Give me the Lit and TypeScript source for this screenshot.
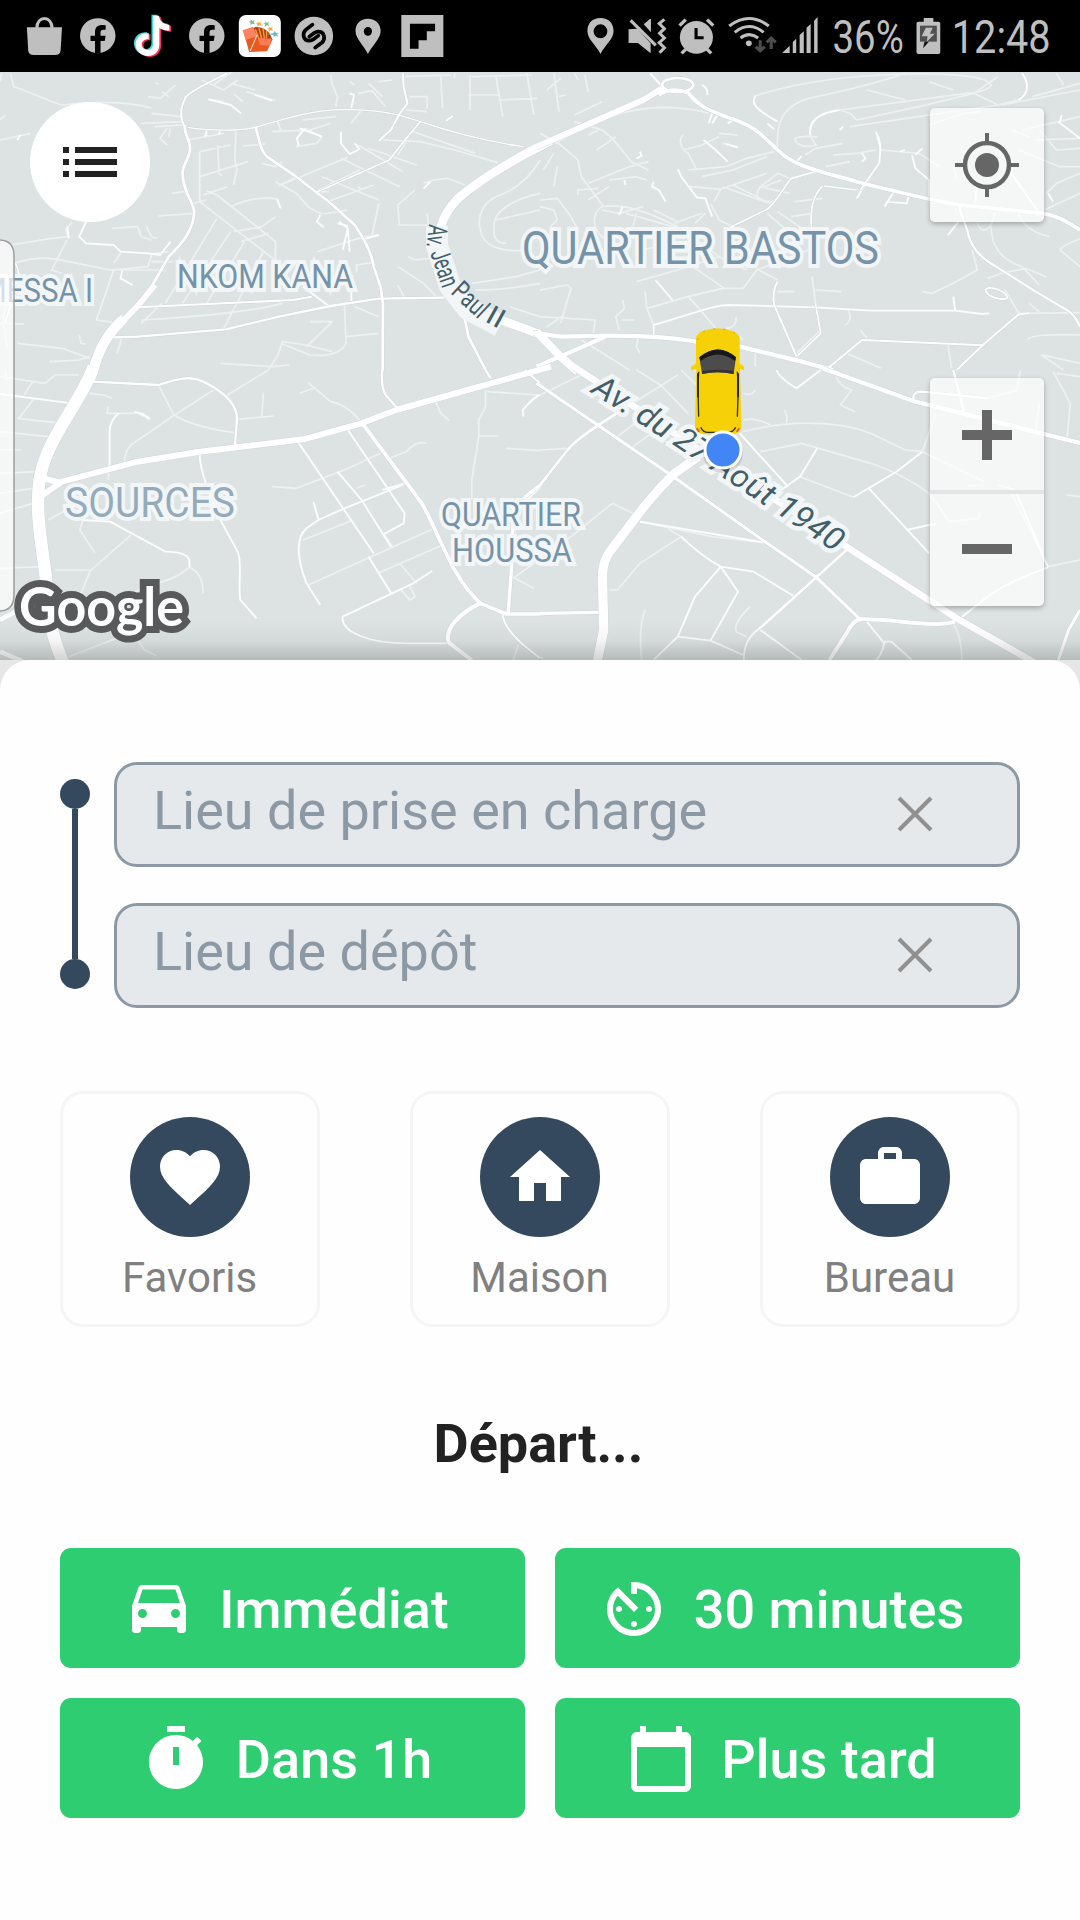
import { LitElement, html, svg, css } from "lit";
import { customElement, property } from "lit/decorators.js";

type Tile = { at: string; minor: string; mid: string; roads: [string, number][] };

/* The map is drawn in four tiles, each one with its own drawing units. */
const SX = 540 / 1568;
const tile = (x: number, y: number) => `translate(${x} ${y}) scale(${SX} ${1 / 3})`;

const TILES: Tile[] = [
  {
    at: tile(0, 70),
    minor: `M5 10L0 35M30 10L40 50C100 70 130 90 180 105C300 90 400 100 440 115M440 130L525 140M0 150L15 135
      M430 80L465 85L510 45M450 38L460 42M470 65L490 80M530 155L410 160M450 170L535 165M485 175L465 205L485 225M495 175L490 200M0 210L90 190
      M545 210L650 190M600 180V200M685 180L682 270L688 300L678 345M632 225L636 310L645 318M580 245V395L800 572M580 245L670 225M705 228L770 222
      M580 320L720 275M590 375L660 350M600 362L630 375L800 515V575M675 408C720 385 770 380 808 388M560 400L600 390M500 370L550 362M460 438L565 430
      M630 445L480 700M670 485L530 700M710 515L600 700M765 545L650 775M680 485L760 470L800 440M700 515L780 490M410 750C600 740 750 720 820 700
      M760 280L800 290L820 275M860 320L810 347L1010 262M955 365L915 365L1045 300M950 395L1085 345M800 335L860 370L900 415L935 432M940 432L1010 420M920 545L1010 515L1060 500L1100 495
      M990 265L1160 350M1040 225L1170 305M1070 235L1210 285M1040 350L1050 360M1110 210L1220 215L1320 240L1445 278M1200 185L1380 250M1155 255L1180 215
      M585 30L650 60L690 30M620 45L680 0M670 40L740 60M680 72L705 95M715 65L800 92M650 95L605 88M790 185L900 180L960 160M805 150L815 180M880 150L975 140M885 175L935 200L920 220L860 230
      M960 15L965 45L980 80L975 110M1015 35L1030 45M1040 70L1080 62L1120 110M1070 40L1110 80M1050 120L1020 160M1100 35L1140 30M1190 80H1240V115M1165 20L1310 15M1280 20L1285 115
      M1320 10V25M1365 15V120M1360 75H1450M1440 20L1460 140M1530 10L1550 135M1370 20L1545 15M1450 90L1560 85M1160 465L1155 405L1205 360M1155 465H1240M1230 340L1260 330L1300 325L1350 345
      M1568 270C1540 320 1500 360 1440 380C1400 400 1385 440 1395 480C1400 520 1440 550 1540 540M1568 370C1480 390 1430 430 1435 470C1430 500 1440 520 1470 520M1440 450L1568 420M1370 640L1500 620L1568 600M1380 660C1450 660 1520 650 1568 640
      M1155 590L1230 640L1270 683M1185 560L1205 570L1245 565M1155 645L1175 685M1480 710L1568 740M1035 605V585L1080 578M1000 700L1005 820C990 850 950 860 900 855L815 820M780 898L805 860L820 815L890 825L965 845M890 830L965 755H900M1005 800L1100 790M640 880L790 890L840 885
      M355 800L340 850M230 795L235 820L250 822M50 820L180 835L260 865M145 875L230 870L260 860M0 760L70 762M15 700L10 760L20 830M450 550L490 545M440 575H500M480 600L330 600L280 750L330 758L360 735M195 510L150 600L180 610M330 580L350 550
      M40 580C100 560 140 560 200 575L320 600L430 590L440 555M30 525L150 505L200 500M325 475L400 470L410 500L440 510M425 470L440 500L455 505M210 455L190 480L200 505M1030 710L1100 740M410 760L470 700M1100 400L1080 500M1240 430L1245 470M1180 120L1240 125M935 320L1100 390`,
    mid: `M250 455L230 500L250 520L330 525L350 545L430 550L465 555L495 515M355 602L350 625L385 645M985 455L1010 475L1015 545M1010 475L995 540M1020 640V695M880 650L955 708M870 175L935 200M990 185V220L1015 252L1040 240M605 88L670 105L700 130M1015 70L1028 75L1020 115M740 75L790 92M595 200L600 180M635 195L640 180M805 388L815 415M1055 508L1100 495M1295 152L1315 138M1030 220L1045 240M1230 355L1250 335M930 435L920 455L940 472M980 460L1010 468M50 210L60 195M195 470L200 505M868 228L862 205L885 175`,
    roads: [
      ["M535 168C520 140 525 110 540 80C560 60 600 40 660 10", 6],
      ["M545 172C600 182 700 185 750 170C830 145 900 120 1000 118C1100 120 1150 130 1220 155C1350 200 1450 220 1520 230", 4],
      ["M742 170L752 210Q760 245 775 260L860 320L960 400L1030 465C1060 510 1080 550 1085 590L1105 650L1112 700L1111 900", 8],
      ["M400 712L650 700L850 690L905 680", 6],
      ["M330 802L400 800L655 778L810 740L960 708L1100 686L1290 683", 7],
      ["M1170 10L1172 50L1183 100L1160 132L1135 180L1100 212", 6],
      ["M1222 153L1180 205L1130 270L915 368", 5],
      ["M1300 683L1340 720Q1350 740 1360 800L1410 900", 8],
      ["M538 165C530 185 550 200 552 235C550 270 530 280 530 310C532 370 560 390 564 425C562 480 530 520 490 560L440 650L400 705", 8],
      ["M270 905C285 840 320 790 350 760L400 708L450 645", 18],
      ["M270 905C280 860 300 800 360 745", 30],
      ["M1600 212C1450 290 1380 340 1330 385C1280 440 1265 490 1285 560C1300 640 1340 700 1430 740C1490 765 1530 775 1580 800", 26],
      ["M45 580Q60 610 55 650L30 705L15 760", 5],
    ],
  },
  {
    at: tile(540, 70),
    minor: `M40 10L55 125M20 60L60 25M55 80L75 75M100 10L110 30M130 15L140 65M100 135L180 95M45 220C150 150 250 115 350 112C420 112 460 120 490 130M100 155L180 180L210 205L265 275L315 300
      M0 190L60 225L110 270L120 320L185 410M140 195L170 180M165 240L220 200M140 340L260 290L315 275M140 390L200 350M200 330L280 320L310 330M0 390L50 385L90 440L110 480M0 410L40 420L50 450L30 470M40 350L50 290M10 300L40 250M110 375V360L170 355
      M415 195C400 210 410 240 430 250L455 300M415 240L460 228M430 300L540 290L600 265L680 245M470 320L560 300L660 260M435 350L525 358L560 345L660 310M460 230L520 200M520 190L575 195M530 220L570 230
      M625 80C610 100 630 120 690 155M620 80C700 50 850 20 1000 15C1200 5 1300 20 1310 45C1310 55 1270 70 1240 70L870 120C800 130 780 160 785 195L800 225M690 245C685 160 700 110 780 85C850 70 950 50 1060 10M870 120L900 130L920 150L1100 110L1260 70L1330 20
      M1400 10C1420 40 1420 70 1390 90L1330 105L900 170M1260 70L1330 105M950 60L1060 90M1130 35L1200 60M1430 80L1568 40M1340 105L1568 60M740 205C740 225 770 235 805 225M740 205C760 195 790 200 805 200M770 255L800 235L880 220M850 255L920 250L975 240M990 240L1100 250L1160 290M830 290L900 275
      M1400 180L1568 140M1450 180L1500 240L1568 235M1390 240L1510 290L1568 290M1440 210L1568 205M1470 370L1500 340L1568 310M1465 420L1568 370M1200 285L1210 330M1130 165L1230 130L1280 125M1370 180L1420 200M1500 10L1520 45
      M725 325L690 310L640 350C620 380 630 395 680 395M650 350L700 330M640 350L725 370M740 395L820 385M560 345L650 390M530 350L680 405M505 395L525 358M560 470L520 450L495 400M690 425L760 475M660 430L710 475M730 440L790 430M450 460L480 430M390 460L470 430M330 420L400 455
      M180 410C150 430 150 470 180 500L240 550M180 410C240 400 300 420 400 470M180 420L230 430L300 410M250 430L420 480L520 560L600 600M280 430L270 470M275 500L370 510M290 540L400 520M280 635L400 600L520 560M430 580L535 655M310 715L430 680L530 655L590 655L630 600L780 540M430 680L470 725L510 775M330 765L310 715L305 665M0 660L80 645L90 655L60 760M0 740L160 750L155 790M20 770L70 735M230 780L220 740L245 715L240 690M235 750H275M285 800L280 830L290 850M120 810L260 900
      M790 620L800 700L815 780L745 850M800 660L875 665M690 665H740M570 740C570 760 560 775 540 775M895 720C905 740 900 760 885 765M930 780L950 805M890 850L990 895M1185 825L1195 895M1110 665L1140 670L1200 640L1270 600L1255 540M1300 625L1340 610L1410 595L1470 620M1350 660L1390 730L1568 728M1420 700L1450 725M1415 810C1430 790 1500 795 1568 795M1455 855L1520 900M1460 855L1568 880
      M1310 470C1310 530 1340 570 1400 590L1450 645M1270 460C1280 490 1310 490 1320 430M1390 430C1400 470 1440 490 1480 500M1510 540C1520 520 1568 510 1568 505M1510 540L1568 590M625 850V890M580 800L590 810M635 600L690 630`,
    mid: `M320 10L355 50M440 75L500 130L490 160M470 45Q490 55 485 75M500 160L515 135M545 160L560 150M290 245L295 258L280 265M245 330L248 345M400 297L410 320L455 382L480 385L500 440M330 335L325 350L345 360L365 395M475 210L510 240L545 275M540 222L575 232M975 185C990 210 990 230 985 280L940 350L920 385M935 250L945 265L935 275M870 180L880 170M980 200L990 240M1080 255L1090 295L1130 330V380M1090 255L1110 235M1045 245L1060 240M660 160L680 178M740 280L760 258M1000 410L1025 370M1005 395L1065 400L1072 372M1505 155L1568 205M1510 155L1515 135M1475 370L1490 395M230 435L240 410M1200 680L1205 720M335 630L385 690M1365 305L1450 430M1265 330V395M1215 455L1185 495M330 765C450 730 500 705 550 705L800 712L960 722L1205 722L1285 732L1305 730M625 80C610 100 630 120 690 155M1400 10C1420 40 1420 70 1390 90M785 195C780 160 800 130 870 120`,
    roads: [
      ["M820 348C790 380 785 420 788 470M825 348L920 360M985 280L930 360", 5],
      ["M555 470L660 418C700 380 710 345 730 325L800 305", 5],
      ["M745 860L680 705C675 680 680 650 690 635", 6],
      ["M745 860L815 790L800 700", 5],
      ["M830 900L935 810L1285 826L1390 733L1420 730M1285 826L1210 900", 6],
      ["M1222 405C1210 420 1240 460 1245 500C1265 560 1310 580 1340 600L1440 665L1530 720Q1550 730 1568 770", 7],
      ["M1293 660C1300 645 1350 660 1358 683C1350 692 1300 685 1293 660", 5],
      ["M330 765V795", 6],
      ["M-10 230L300 90L360 52", 18],
      ["M355 45A45 21 0 1 0 445 45A45 21 0 1 0 355 45", 8],
      ["M345 75Q380 50 430 68C460 110 490 120 540 140C620 165 640 190 690 240C740 290 800 300 920 335C1040 365 1100 385 1220 405L1460 430C1500 435 1540 460 1568 480", 11],
      ["M-20 788L60 800L200 797C350 797 420 808 470 818L580 830L760 875L850 900", 13],
      ["M-10 890L80 850L190 800", 12],
      ["M-10 785L60 860L110 905", 24],
    ],
  },
  {
    at: tile(0, 370),
    minor: `M0 20L130 40L160 15L230 15M20 30L15 0M70 75L95 35M100 85L55 145M50 145L180 160M0 185L140 200M0 240H60M0 310L110 305M0 370L95 355M0 430L95 400M260 70L300 75L325 85M310 130L315 110M310 130H345M780 0L660 75M620 60L500 140L380 225Q360 250 362 275M460 45L505 135Q560 170 680 188M345 130H400L435 148
      M765 68L760 140M692 148L795 138M870 70L910 55M790 350L860 355L1000 300L1105 250M895 38L960 95Q1010 105 1050 158M1130 265L1180 245Q1210 210 1240 220M1060 345L1035 355M1410 60L1410 110L1390 150V200L1370 330V390M1390 198H1448M1470 235L1568 242M1415 65L1568 75M1265 95L1280 130L1305 152
      M140 450L200 415M315 285V330M240 450L232 480L275 548M380 495L262 603L235 670M160 600H262M0 595L120 590M590 670Q590 610 550 592M550 592Q500 635 430 645L200 780M385 790L420 840L455 858M200 860L350 800
      M880 510L1020 452M895 645L1255 478M1100 608L1285 525M1160 580L1210 640M1165 660L1190 690L1205 680L1190 650M1490 625L1550 580M1495 625L1550 655M1520 825L1568 860M1505 825L1490 870M1140 530L1115 492`,
    mid: `M240 450L320 455L480 545Q540 545 550 570L550 592M390 125Q420 130 435 148M345 130Q318 150 318 190V290M865 215L1085 550M1010 180L1175 430L1172 460L1115 492M980 305L1050 390L1135 530M1110 360L1175 340M1000 415L1170 345M910 395L925 450M930 705L890 640C860 560 860 500 890 475L925 450L1000 415M1070 560L1135 668M0 72L210 100M1520 140L1518 120Q1550 80 1568 75M1200 640L995 740C990 790 1080 820 1180 820H1300M1200 640L1255 603M580 255Q580 310 640 450L690 545C705 580 690 640 698 690L745 745M1570 350L1500 420L1490 520`,
    roads: [
      ["M270 35L460 45C530 20 560 20 590 35C650 65 690 100 688 150L682 232", 7],
      ["M1110 0Q1105 50 1120 75L1158 120M1410 0L1425 25M1525 0L1568 40", 7],
      ["M1052 160L1225 400C1280 500 1310 620 1395 700L1470 732H1580", 11],
      ["M1395 700C1330 730 1290 780 1303 818L1370 870", 12],
      ["M1460 732Q1460 770 1520 825L1568 865", 6],
      ["M1475 735L1485 600L1490 420Q1520 380 1575 340", 10],
      ["M0 750L70 712L110 690", 14],
      ["M0 845L80 880", 14],
      ["M1600 -10L1150 120L1050 160L880 208L580 245L400 275L180 335L110 385", 18],
      ["M110 320L180 340", 18],
      ["M272 -10C240 90 130 210 115 330C100 430 125 540 135 640C140 740 150 800 185 880", 36],
    ],
  },
  {
    at: tile(540, 370),
    minor: `M0 75L130 10M280 0L350 45L430 130M170 165L400 15M225 200L340 110M270 230L380 150M0 240L80 235M410 0L470 60M590 70Q615 80 625 60M710 120L718 140L715 160M860 20Q870 50 905 60L872 105L915 125M590 150Q620 140 670 165M590 185C700 155 850 145 960 190L1060 240L1110 245L1150 130
      M640 245L760 220L960 280Q1050 310 1130 370L1190 455L1275 445V425M755 320L910 382M1110 245L1290 335M1240 348L1290 345M1530 375L1568 380M1490 5L1540 100L1530 210M1450 100L1440 180M1395 0L1385 60L1300 85L1100 65M1360 350L1475 590M1500 10L1568 20M0 560L90 500L210 400L270 430
      M290 455L500 500L665 520M200 660H225L290 580L410 500L370 475M1200 760Q1225 800 1225 870M305 720Q285 770 295 870M0 860L10 865M1330 345L1380 360M580 190L720 350M610 710Q560 760 570 785L600 800M1475 590L1568 570`,
    mid: `M410 500Q470 560 525 590L620 605L740 680M525 590L450 680L400 800L495 812L575 665L525 590M330 870L400 800M495 812L590 855M640 780L760 870M635 778Q590 810 592 870M805 235L755 320L700 360M1110 245L1035 305L910 382M955 355L1130 550M1065 480L1130 465M688 0Q690 20 745 55L815 0M945 750L1000 820Q990 860 975 870M1000 815H1020L1080 870M1060 100M1475 592Q1350 640 1300 680L1220 745M1380 360L1475 592M1130 465L1150 462M580 190L720 350M290 455L665 520`,
    roads: [
      ["M0 345L80 240Q110 200 240 120", 8],
      ["M0 730L170 727", 10],
      ["M1568 720L1535 780L1505 870", 9],
      ["M1085 90Q1080 65 1110 65L1300 85M1200 0L1230 120L1210 130", 7],
      ["M740 680L890 540M740 680L635 778", 8],
      ["M840 870L890 790Q910 750 930 748C1020 745 1150 775 1205 755", 12],
      ["M-10 40L380 315L660 520L800 620L930 748", 9],
      ["M820 -5L1090 95L1580 222", 13],
      ["M460 260L390 310Q330 370 280 440L210 535C180 570 180 610 182 650L185 780L165 880", 27],
      ["M95 -12L450 230L890 530L1210 745L1440 880", 20],
    ],
  },
];

/* Words of the bent avenue label: text, x, y, angle, length. */
const JEAN_PAUL: [string, number, number, number, number][] = [
  ["Av.", 429, 224, 96, 23],
  ["Jean", 430, 253, 71, 38],
  ["Paul", 450, 293, 43, 39],
  ["II", 484, 321, 29, 17],
];

@customElement("status-bar")
class StatusBar extends LitElement {
  static styles = css`
    :host { display: block; }
    .bar { display: flex; justify-content: space-between; height: 72px; background: #000; color: #bfbfbf; }
    .group { display: flex; }
    svg { display: block; height: 72px; overflow: visible; }
    text { font-family: Roboto, sans-serif; fill: #bfbfbf; }
  `;
  private icon(x: number, w: number, body: unknown) {
    return html`<svg width=${(w * 540) / 1568} viewBox="${x} 0 ${w} 216" preserveAspectRatio="none" fill="#bfbfbf">${body}</svg>`;
  }
  private face() {
    return svg`<ellipse cx="284" cy="107" rx="51.500" ry="52.500"/><path fill="#000" d="M276 160V123H263V107H276V97C276 82 284 75 297 75L307 76V89H300C294 89 292 92 292 98V107H307L304 123H292V160Z"/>`;
  }
  render() {
    const note = "M443 45H460C461 60 472 71 490 72V90C480 90 470 88 461 82V132C461 152 446 166 428 166C407 166 392 150 392 131C392 111 408 96 430 98V116C419 114 410 121 410 131C410 142 419 148 427 148C437 148 443 140 443 130Z";
    return html`<div class="bar">
      <div class="group">
        ${this.icon(0, 215, svg`<path d="M78 82H180L176 152Q174 165 160 165H98Q84 165 82 152Z"/><path d="M107 84C107 46 151 46 151 84" fill="none" stroke="#bfbfbf" stroke-width="9"/>`)}
        ${this.icon(215, 150, this.face())}
        ${this.icon(365, 165, svg`<path d=${note} fill="#3fdcd8" transform="translate(-4 -1)"/><path d=${note} fill="#f0345c" transform="translate(6 5)"/><path d=${note} fill="#fff" transform="translate(1 2)"/>`)}
        ${this.icon(215, 150, this.face())}
        ${this.icon(680, 157, svg`<rect x="694" y="45" width="122" height="126" rx="21" fill="#fff"/>
          <path d="M707 92L748 82L792 118L776 154L724 156Z" fill="#e55b22"/><path d="M735 84C755 74 785 92 790 116L748 118Z" fill="#a94414"/><path d="M742 88L752 115M752 82L760 114M764 84L768 114M775 92L774 114" stroke="#ff9837" stroke-width="4"/>
          <path d="M705 91L735 80L748 108L714 120Z" fill="#ff8360"/><path d="M748 113L788 116L785 137L756 135Z" fill="#ff7955"/><path d="M747 105L727 153" stroke="#ffd8bd" stroke-width="3"/>
          <g fill="#79bd83"><path d="M728 58L733 63L740 60L737 67L741 73L733 71L728 75V68L723 63L729 64Z"/><path d="M770 64L775 69L782 65L779 72L783 78L775 76L770 80V73L765 69L771 70Z"/></g>
          <path d="M748 64L753 69L760 65L757 72L761 78L753 76L748 80V73L743 69L749 70ZM781 79L786 84L793 81L790 87L794 92L786 91L781 95V88L776 84L782 85Z" fill="#f5a640"/><path d="M798 93L802 99L809 98L805 104L808 110L801 107L795 111V105L777 103L794 100Z" fill="#65bad0"/>`)}
        ${this.icon(837, 150, svg`<ellipse cx="912" cy="108" rx="56" ry="58"/><path d="M908 74L890 88C876 100 882 122 898 122Q904 123 911 118L925 107M916 143L934 129C948 117 942 95 926 95Q920 94 913 99L899 110" fill="none" stroke="#000" stroke-width="11" stroke-linecap="round" stroke-linejoin="round"/>`)}
        ${this.icon(987, 147, svg`<path fill-rule="evenodd" d="M1068 56C1046 56 1032 71 1032 93C1032 117 1057 137 1068 162C1080 137 1105 117 1105 93C1105 71 1090 56 1068 56ZM1068 81A12 13 0 1 1 1068 107A12 13 0 1 1 1068 81Z"/>`)}
        ${this.icon(1134, 170, svg`<rect x="1164" y="45" width="122" height="126"/><path d="M1189 71H1262V94H1238V121H1214V146H1189Z" fill="#000"/>`)}
      </div>
      <div class="group">
        ${this.icon(100, 135, svg`<path fill-rule="evenodd" d="M174 54C151 54 136 70 136 93C136 118 162 136 174 162C186 136 212 118 212 93C212 70 197 54 174 54ZM174 73A20 21 0 1 1 174 115A20 21 0 1 1 174 73Z"/>`)}
        ${this.icon(235, 150, svg`<path d="M257 88L283 86L321 130V160L284 129H257ZM301 73L319 57H322V97Z"/><path d="M263 61L336 136" stroke="#bfbfbf" stroke-width="9"/><path d="M361 56L346 69L361 84L347 98L361 112L346 126L361 141L347 156" transform="translate(0 2)" fill="none" stroke="#bfbfbf" stroke-width="9"/>`)}
        ${this.icon(385, 145, svg`<ellipse cx="453" cy="112" rx="48" ry="49"/><path d="M404 77L422 59M484 59L502 77M422 148L410 160M484 148L496 160" stroke="#bfbfbf" stroke-width="10"/><path d="M452 84V113H474" fill="none" stroke="#000" stroke-width="9"/>`)}
        ${this.icon(530, 165, svg`<path d="M548 78Q606 33 663 78M564 97Q606 62 648 97M581 114Q606 94 632 114" fill="none" stroke="#bfbfbf" stroke-width="9"/><circle cx="605" cy="130" r="8.500"/><path d="M638 121V151M625 140L638 153L651 140M670 147V116M657 127L670 114L683 127" fill="none" stroke="#4d4d4d" stroke-width="9"/>`)}
        ${this.icon(695, 135, svg`<path d="M704 159H726V137ZM735 159H745V116L735 126ZM755 159H767V94L755 105ZM775 159H787V72L775 83ZM797 159H807V51L797 62Z"/>`)}
        ${this.icon(830, 246, svg`<text x="849" y="159" font-size="137" textLength="207" lengthAdjust="spacingAndGlyphs">36%</text>`)}
        ${this.icon(1076, 110, svg`<path d="M1113 54H1141V65H1156Q1161 65 1161 70V157Q1161 162 1156 162H1097Q1092 162 1092 157V70Q1092 65 1097 65H1113Z"/><path d="M1102 77H1151V125H1102Z" fill="#505050"/><path d="M1119 83H1139L1131 101H1145L1122 125L1124 109H1107Z" fill="#bfbfbf"/><path d="M1115 125H1128L1111 145Z" fill="#111"/>`)}
        ${this.icon(1186, 382, svg`<text x="1197" y="159" font-size="137" textLength="287" lengthAdjust="spacingAndGlyphs">12:48</text>`)}
      </div>
    </div>`;
  }
}

@customElement("city-map")
class CityMap extends LitElement {
  static styles = css`
    :host { display: block; position: relative; height: 588px; overflow: hidden; background: #dde3e3; }
    svg { display: block; }
    .roads { fill: none; stroke: #fff; stroke-linejoin: round; stroke-linecap: butt; }
    .place, .street { font-family: Roboto, sans-serif; paint-order: stroke; stroke: #f3f6f8; stroke-width: 8px; stroke-linejoin: miter; }
    .place { fill: #7593a9; }
    .street { fill: #425f69; stroke-width: 9px; }
    .halo { fill: #f3f6f8; }
    .ink { stroke: none; }
    .slanted { font-style: italic; }
    .brand { font-family: Lato, sans-serif; font-weight: 700; fill: #fff; stroke: #58595b; stroke-width: 14px; paint-order: stroke; stroke-linejoin: miter; stroke-miterlimit: 2; }
    .round { position: absolute; left: 30px; top: 30px; width: 120px; height: 120px; border: 0; border-radius: 50%; background: #fff; padding: 0; display: grid; place-items: center; }
    .panel { position: absolute; left: 930px; width: 114px; border-radius: 5px; background: rgba(255, 255, 255, 0.7); box-shadow: 0 2px 5px rgba(0, 0, 0, 0.28); }
    .locate { top: 36px; height: 114px; }
    .zoom { top: 306px; height: 228px; }
  `;
  render() {
    return html`
      <svg width="1080" height="588" viewBox="0 72 1080 588">
        <defs>
          <linearGradient id="shade" x1="0" y1="0" x2="0" y2="1"><stop offset="0" stop-color="#000" stop-opacity="0"/><stop offset=".5" stop-color="#000" stop-opacity=".035"/><stop offset="1" stop-color="#000" stop-opacity=".18"/></linearGradient>
          <path id="aout" d="M590 392L672 444L842 557"/>
        </defs>
        ${TILES.map((t) => svg`<g class="roads" transform=${t.at}>
          <path d=${t.minor} stroke-width="5" opacity=".5"/>
          <path d=${t.mid} stroke-width="5.500" opacity=".9"/>
          ${t.roads.map(([d, w]) => svg`<path d=${d} stroke="#cfd5d7" stroke-width=${w + 2.5}/>`)}
          ${t.roads.map(([d, w]) => svg`<path d=${d} stroke-width=${w}/>`)}
        </g>`)}
        <text class="place" x="-19" y="302" font-size="34" textLength="112" lengthAdjust="spacingAndGlyphs">MESSA I</text>
        <text class="place" x="177" y="288" font-size="34" textLength="176" lengthAdjust="spacingAndGlyphs">NKOM KANA</text>
        <text class="place" x="522" y="264" font-size="46" textLength="357" lengthAdjust="spacingAndGlyphs">QUARTIER BASTOS</text>
        <text class="place" x="65" y="517" font-size="42" textLength="170" lengthAdjust="spacingAndGlyphs" fill-opacity=".75">SOURCES</text>
        <text class="place" x="441" y="526" font-size="34" textLength="140" lengthAdjust="spacingAndGlyphs">QUARTIER</text>
        <text class="place" x="452" y="562" font-size="34" textLength="120" lengthAdjust="spacingAndGlyphs">HOUSSA</text>
        <path d="M437 226L437 246L450 286L468 309L500 326" fill="none" stroke="#f3f6f8" stroke-width="22" stroke-linejoin="round"/>
        ${JEAN_PAUL.map(([w, x, y, a, l]) => svg`<text class="street ink" font-size="27" transform="translate(${x} ${y}) rotate(${a})" textLength=${l} lengthAdjust="spacingAndGlyphs">${w}</text>`)}
        <text class="street slanted" font-size="32"><textPath href="#aout" textLength="293" lengthAdjust="spacingAndGlyphs">Av. du 27 Août 1940</textPath></text>
        <g transform="translate(670 320) scale(.33333)">
          <path d="M78 55Q82 38 100 33Q143 16 186 33Q204 38 209 55V130L222 140V151L210 146L214 320Q213 338 190 343H100Q77 338 75 320L79 146L63 151V140L78 130Z" fill="#f6d108"/>
          <path d="M84 60Q84 42 102 34Q145 18 186 34Q203 43 204 60" fill="none" stroke="#665b18" stroke-opacity=".6" stroke-width="2" stroke-dasharray="5 26"/>
          <path d="M88 112Q144 65 198 112L191 162Q143 151 96 162Z" fill="#4b4c4b"/><path d="M88 112Q144 65 198 112L195 123Q144 84 91 123Z" fill="#171817"/><path d="M96 162Q143 151 191 162L190 153Q143 145 97 153Z" fill="#333"/>
          <path d="M86 155L84 200L86 290M202 155L205 200L202 290" fill="none" stroke="#34331c" stroke-width="4"/><path d="M84 160V232M204 160V232" stroke="#292a21" stroke-width="6"/>
          <path d="M92 322Q100 337 112 337H175Q189 337 197 322" fill="none" stroke="#38320a" stroke-width="4"/><path d="M80 325L88 335M208 325L200 335" stroke="#d8541b" stroke-width="5"/>
        </g>
        <circle cx="723" cy="453" r="20" fill="#000" opacity=".12"/>
        <circle cx="723" cy="450" r="18" fill="#4285f4" stroke="#fff" stroke-width="3"/>
        <path d="M-5 240H-1Q14 240 14 256V595Q14 611-1 611H-5Z" fill="#fff" fill-opacity=".7" stroke="#9c9e9f" stroke-width="1.500"/>
        <rect x="0" y="620" width="1080" height="40" fill="url(#shade)"/>
        <text class="brand" x="19" y="626" font-size="54" textLength="165" lengthAdjust="spacingAndGlyphs">Google</text>
      </svg>
      <button class="round" aria-label="Menu"><svg width="54" height="30" viewBox="0 0 54 30" fill="#222"><path d="M0 0H6V6H0ZM12 0H54V6H12ZM0 12H6V18H0ZM12 12H54V18H12ZM0 24H6V30H0ZM12 24H54V30H12Z"/></svg></button>
      <div class="panel locate"><svg width="114" height="114" viewBox="0 0 114 114" fill="none" stroke="#666"><circle cx="57" cy="57" r="22" stroke-width="4.500"/><circle cx="57" cy="57" r="12" fill="#666" stroke="none"/><path d="M57 25V34M57 80V89M25 57H34M80 57H89" stroke-width="4"/></svg></div>
      <div class="panel zoom"><svg width="114" height="228" viewBox="0 0 114 228" fill="#666"><path d="M52 32H62V52H82V62H62V82H52V62H32V52H52ZM32 166H82V176H32Z"/><path d="M0 112H114V116H0Z" fill="#e2e5e5"/></svg></div>`;
  }
}

@customElement("place-field")
class PlaceField extends LitElement {
  @property() label = "";
  static styles = css`
    :host { display: block; }
    .field { box-sizing: border-box; height: 105px; border: 3px solid #8c99a5; border-radius: 23px; background: #e5e9ec; display: flex; align-items: center; justify-content: space-between; padding: 0 84px 2px 36px; }
    .hint { color: #8c99a5; font: 400 54px/60px Roboto, sans-serif; padding-bottom: 5px; white-space: nowrap; }
    svg { display: block; }
  `;
  render() {
    return html`<div class="field"><span class="hint">${this.label}</span>
      <svg width="36" height="36" viewBox="0 0 36 36"><path d="M2 2L34 34M34 2L2 34" stroke="#909090" stroke-width="4"/></svg></div>`;
  }
}

const ICONS = {
  heart: "M12 21.35l-1.45-1.32C5.400 15.360 2 12.280 2 8.500 2 5.420 4.420 3 7.500 3c1.740 0 3.410.81 4.500 2.090C13.090 3.810 14.760 3 16.500 3 19.580 3 22 5.420 22 8.500c0 3.780-3.400 6.860-8.550 11.540L12 21.350z",
  home: "M10 20v-6h4v6h5v-8h3L12 3 2 12h3v8z",
  work: "M20 6h-4V4c0-1.110-.89-2-2-2h-4c-1.110 0-2 .89-2 2v2H4c-1.110 0-1.990.89-1.990 2L2 19c0 1.110.89 2 2 2h16c1.110 0 2-.89 2-2V8c0-1.110-.89-2-2-2zm-6 0h-4V4h4v2z",
  car: "M18.920 5.010C18.720 4.420 18.160 4 17.500 4h-11c-.66 0-1.210.42-1.420 1.010L3 11v8c0 .55.45 1 1 1h1c.55 0 1-.45 1-1v-1h12v1c0 .55.45 1 1 1h1c.55 0 1-.45 1-1v-8l-2.080-5.990zM6.500 15c-.83 0-1.500-.67-1.500-1.500S5.670 12 6.500 12s1.500.67 1.500 1.500S7.330 15 6.500 15zm11 0c-.83 0-1.500-.67-1.500-1.500s.67-1.500 1.500-1.500 1.500.67 1.500 1.500-.67 1.500-1.500 1.500zM5 10l1.500-4.500h11L19 10H5z",
  avTimer: "M11 17c0 .55.45 1 1 1s1-.45 1-1-.45-1-1-1-1 .45-1 1zm0-14v4h2V5.080c3.390.49 6 3.390 6 6.920 0 3.870-3.130 7-7 7s-7-3.130-7-7c0-1.680.59-3.220 1.580-4.420L12 13l1.410-1.410-6.800-6.800v.02C4.420 6.450 3 9.050 3 12c0 4.970 4.020 9 9 9 4.970 0 9-4.030 9-9s-4.030-9-9-9h-1zm7 9c0-.55-.45-1-1-1s-1 .45-1 1 .45 1 1 1 1-.45 1-1zM6 12c0 .55.45 1 1 1s1-.45 1-1-.45-1-1-1-1 .45-1 1z",
  timer: "M15 1H9v2h6V1zm-4 13h2V8h-2v6zm8.030-6.610l1.420-1.420c-.43-.51-.9-.99-1.410-1.410l-1.420 1.420C16.070 4.740 14.120 4 12 4c-4.970 0-9 4.030-9 9s4.020 9 9 9 9-4.030 9-9c0-2.120-.74-4.070-1.970-5.610z",
  calendar: "M20 3h-1V1h-2v2H7V1H5v2H4c-1.100 0-2 .9-2 2v16c0 1.100.9 2 2 2h16c1.100 0 2-.9 2-2V5c0-1.100-.9-2-2-2zm0 18H4V8h16v13z",
};

const icon = (d: string) => html`<svg class="icon" width="72" height="72" viewBox="0 0 24 24"><path fill="#fff" fill-rule="evenodd" d=${d}/></svg>`;

@customElement("app-root")
class AppRoot extends LitElement {
  static styles = css`
    :host { display: block; width: 1080px; height: 1920px; overflow: hidden; font-family: Roboto, sans-serif; background: #e6e6e6; }
    .page { display: flex; flex-direction: column; height: 1920px; }
    .sheet { box-sizing: border-box; flex: 1; background: #fefefe; border-radius: 30px 30px 0 0; padding: 101px 60px 0; display: flex; flex-direction: column; }
    .trip { display: flex; gap: 24px; }
    .rail { width: 30px; padding-top: 18px; display: flex; flex-direction: column; align-items: center; }
    .dot { width: 30px; height: 30px; border-radius: 50%; background: #34495e; }
    .line { width: 6px; height: 150px; background: #34495e; }
    .fields { flex: 1; display: flex; flex-direction: column; gap: 36px; padding-top: 1px; }
    .places { display: flex; justify-content: space-between; margin-top: 83px; }
    .place { box-sizing: border-box; width: 260px; height: 236px; border: 3px solid #f5f5f5; border-radius: 23px; padding-top: 23px; display: flex; flex-direction: column; align-items: center; gap: 16px; }
    .disc { width: 120px; height: 120px; border-radius: 50%; background: #34495e; display: grid; place-items: center; }
    .name { font-size: 42px; line-height: 50px; color: #808080; padding-right: 1px; }
    .title { margin: 86px 0 0; padding-right: 3px; text-align: center; font-size: 54px; line-height: 62px; font-weight: 700; color: #222; }
    .grid { display: grid; grid-template-columns: 1fr 1fr; gap: 30px; margin-top: 73px; }
    .act { box-sizing: border-box; height: 120px; border: 0; border-radius: 11px; background: #2fcd72; color: #fff; font: 500 54px/64px Roboto, sans-serif; display: flex; align-items: center; justify-content: center; gap: 24px; padding: 1px 13px 0 0; white-space: nowrap; }
    .act span { padding-top: 2px; }
    .icon { display: block; flex: none; }
  `;
  render() {
    const places = [["Favoris", ICONS.heart], ["Maison", ICONS.home], ["Bureau", ICONS.work]];
    const actions = [["Immédiat", ICONS.car], ["30 minutes", ICONS.avTimer], ["Dans 1h", ICONS.timer], ["Plus tard", ICONS.calendar]];
    return html`<div class="page">
      <status-bar></status-bar>
      <city-map></city-map>
      <main class="sheet">
        <section class="trip">
          <div class="rail"><span class="dot"></span><span class="line"></span><span class="dot"></span></div>
          <div class="fields"><place-field label="Lieu de prise en charge"></place-field><place-field label="Lieu de dépôt"></place-field></div>
        </section>
        <section class="places">${places.map(([n, d]) => html`<div class="place"><span class="disc">${icon(d)}</span><span class="name">${n}</span></div>`)}</section>
        <h2 class="title">Départ...</h2>
        <section class="grid">${actions.map(([n, d]) => html`<button class="act">${icon(d)}<span>${n}</span></button>`)}</section>
      </main>
    </div>`;
  }
}
